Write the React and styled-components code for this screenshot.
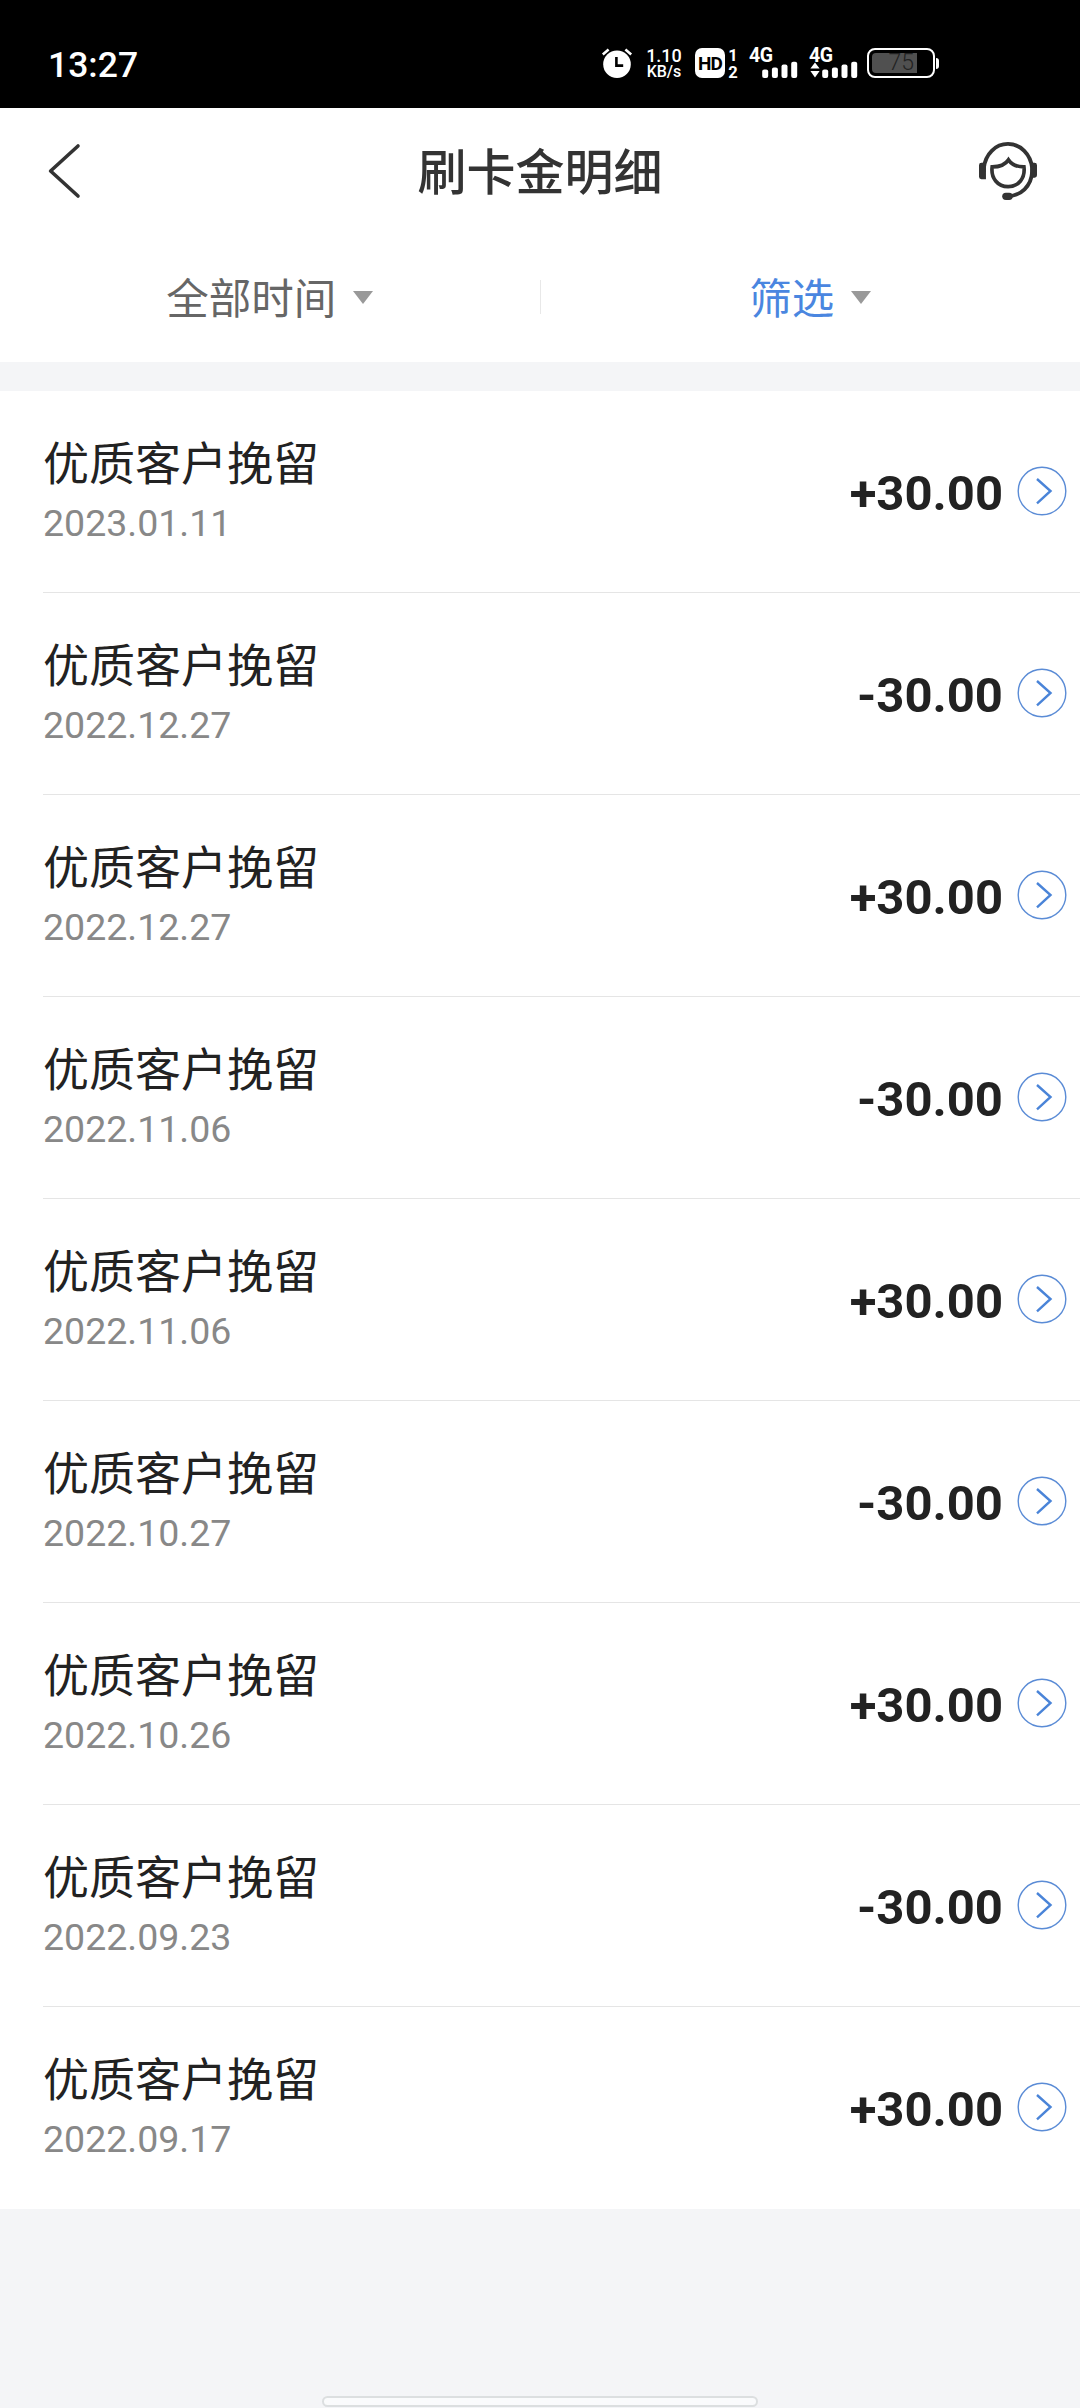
import React from "react";
import styled, { createGlobalStyle } from "styled-components";

const records = [
  { date: "2023.01.11", amount: "+30.00" },
  { date: "2022.12.27", amount: "-30.00" },
  { date: "2022.12.27", amount: "+30.00" },
  { date: "2022.11.06", amount: "-30.00" },
  { date: "2022.11.06", amount: "+30.00" },
  { date: "2022.10.27", amount: "-30.00" },
  { date: "2022.10.26", amount: "+30.00" },
  { date: "2022.09.23", amount: "-30.00" },
  { date: "2022.09.17", amount: "+30.00" },
];

const App = () => {
  return (
    <Screen>
      <GlobalStyle />
      <StatusBar>
        <Clock>13:27</Clock>
        <StatusIcons>
          <AlarmIcon />
          <NetSpeed>
            <Speed>1.10</Speed>
            <Unit>KB/s</Unit>
          </NetSpeed>
          <HdBadge>HD</HdBadge>
          <SimNumbers>
            <span>1</span>
            <span>2</span>
          </SimNumbers>
          <Signal />
          <Signal transfer />
          <Battery>
            <BatteryLevel>75</BatteryLevel>
          </Battery>
          <BatteryTip />
        </StatusIcons>
      </StatusBar>
      <Header>
        <BackIcon />
        <Title>刷卡金明细</Title>
        <ServiceIcon />
      </Header>
      <Filters>
        <Filter>
          <FilterLabel>全部时间</FilterLabel>
          <Caret />
        </Filter>
        <Divider />
        <Filter>
          <FilterLabel $active>筛选</FilterLabel>
          <Caret />
        </Filter>
      </Filters>
      <List>
        {records.map((record, i) => (
          <Row key={i} $last={i === records.length - 1}>
            <Info>
              <Name>优质客户挽留</Name>
              <Date>{record.date}</Date>
            </Info>
            <Amount>{record.amount}</Amount>
            <ArrowIcon />
          </Row>
        ))}
      </List>
      <Footer>
        <HomeIndicator />
      </Footer>
    </Screen>
  );
};

function AlarmIcon() {
  return (
    <svg width="32" height="32" viewBox="0 0 32 32" fill="none">
      <circle cx="16" cy="17.3" r="13.8" fill="#fff" />
      <path d="M1.8 7.5 7.6 2.6M24.4 2.6l5.8 4.9" stroke="#fff" strokeWidth="2.6" />
      <path d="M15.4 10v8.6h6.8" stroke="#000" strokeWidth="2.6" />
    </svg>
  );
}

function Signal({ transfer }) {
  return (
    <SignalBox $transfer={transfer}>
      <SignalLabel>4G</SignalLabel>
      <svg width="50" height="32" viewBox="0 0 50 32" fill="#fff">
        {transfer && <path d="M.4 21.6 5 15.6l4.600 6zM.4 24h9.200L5 30.600z" />}
        <rect x="12.200" y="22.400" width="6" height="8.600" rx="2" />
        <rect x="21.900" y="20.600" width="6" height="10.400" rx="2" />
        <rect x="31.500" y="17.600" width="6" height="13.400" rx="2" />
        <rect x="41.200" y="14.800" width="6" height="16.200" rx="2" />
      </svg>
    </SignalBox>
  );
}

function BackIcon() {
  return (
    <svg width="40" height="60" viewBox="0 0 40 60" fill="none">
      <path
        d="M35 5 7.600 30 35 55"
        stroke="#333"
        strokeWidth="3.600"
        strokeLinecap="round"
        strokeLinejoin="round"
      />
    </svg>
  );
}

function ServiceIcon() {
  return (
    <svg width="58" height="58" viewBox="0 0 60 60" fill="none" stroke="#333">
      <path
        d="M5 31v-4C6.500 12.500 17 2 30 2s23.500 10.500 25 25v4c-.8 14.500-11.500 25-26 25.200"
        strokeWidth="4"
      />
      <path
        d="M0 24q0-2.500 2.500-2.500h4.700v17H2.500Q0 38.500 0 36zM60 24q0-2.500-2.500-2.500h-4.200l-.5 15.500h4.700q2.500 0 2.500-2.500z"
        fill="#333"
        stroke="none"
      />
      <rect x="24" y="52.400" width="11" height="7.600" rx="3.800" fill="#333" stroke="none" />
      <path
        d="M13.600 25.800c7.400 0 13-1.400 16.900-7.300 4.100 5.900 9.300 7.300 16 7.300 1.500 11.600-5.600 20.400-16.400 20.400s-18-8.800-16.500-20.400z"
        strokeWidth="3.800"
      />
    </svg>
  );
}

function ArrowIcon() {
  return (
    <svg width="50" height="50" viewBox="0 0 50 50" fill="none">
      <circle cx="25" cy="25" r="23.800" stroke="#5b8cd6" strokeWidth="1.400" />
      <path d="M20 13 33.500 25 20 37.300" stroke="#4a84d8" strokeWidth="2.400" />
    </svg>
  );
}

const GlobalStyle = createGlobalStyle`
  body {
    margin: 0;
    background: #f4f5f7;
    font-family: Roboto, "Noto Sans CJK SC", sans-serif;
  }

  svg {
    display: block;
    flex-shrink: 0;
  }
`;

const Screen = styled.div`
  display: flex;
  flex-direction: column;
  width: 1080px;
  height: 2408px;
  overflow: hidden;
`;

const StatusBar = styled.div`
  display: flex;
  justify-content: space-between;
  height: 108px;
  box-sizing: border-box;
  padding: 47px 141px 0 48px;
  background: #000;
  color: #fff;
`;

const Clock = styled.div`
  font-size: 35.5px;
  font-weight: 500;
  line-height: 36px;
`;

const StatusIcons = styled.div`
  display: flex;
  align-items: flex-start;
`;

const NetSpeed = styled.div`
  width: 38px;
  margin: 1px 12px 0 12px;
  display: flex;
  flex-direction: column;
  align-items: center;
  font-weight: 500;
`;

const Speed = styled.span`
  font-size: 18px;
  line-height: 16px;
`;

const Unit = styled.span`
  font-size: 16px;
  line-height: 16px;
`;

const HdBadge = styled.div`
  width: 30px;
  height: 30px;
  margin-top: 1px;
  border-radius: 7px;
  background: #fff;
  color: #000;
  font-size: 19px;
  font-weight: 700;
  line-height: 31px;
  letter-spacing: -0.8px;
  text-align: center;
`;

const SimNumbers = styled.div`
  display: flex;
  flex-direction: column;
  align-items: center;
  width: 12px;
  margin: 0 11px 0 2px;
  font-size: 16.5px;
  font-weight: 700;
  line-height: 17px;
`;

const SignalBox = styled.div`
  position: relative;
  width: 50px;
  margin-left: ${(props) => (props.$transfer ? "10px" : "0")};
`;

const SignalLabel = styled.span`
  position: absolute;
  top: 1px;
  left: -1px;
  font-size: 19.5px;
  font-weight: 700;
  line-height: 16px;
  letter-spacing: -0.5px;
`;

const Battery = styled.div`
  width: 68px;
  height: 30px;
  margin: 1px 0 0 7px;
  box-sizing: border-box;
  padding: 3px;
  border: 2px solid #fff;
  border-radius: 8px;
`;

const BatteryLevel = styled.div`
  width: 45px;
  height: 20px;
  border-radius: 4px 0 0 4px;
  background: #505050;
  color: #222;
  font-size: 23px;
  font-weight: 300;
  line-height: 20px;
  text-align: right;
  box-sizing: border-box;
  padding-right: 3px;
`;

const BatteryTip = styled.div`
  width: 3px;
  height: 11px;
  margin: 11px 0 0 1px;
  border-radius: 0 3px 3px 0;
  background: #fff;
`;

const Header = styled.div`
  display: flex;
  align-items: center;
  justify-content: space-between;
  height: 126px;
  box-sizing: border-box;
  padding: 0 43px;
  background: #fff;
`;

const Title = styled.div`
  padding-top: 5px;
  margin-left: 18px;
  font-size: 49px;
  font-weight: 500;
  line-height: 60px;
  color: #333;
`;

const Filters = styled.div`
  display: flex;
  align-items: center;
  height: 128px;
  box-sizing: border-box;
  padding-bottom: 2px;
  background: #fff;
`;

const Filter = styled.div`
  flex: 1;
  display: flex;
  align-items: center;
  justify-content: center;
  gap: 17px;
`;

const FilterLabel = styled.span`
  padding-top: 5px;
  font-size: 42.5px;
  line-height: 60px;
  color: ${(props) => (props.$active ? "#4a86e0" : "#666")};
`;

const Caret = styled.span`
  border: 10px solid transparent;
  border-top: 13px solid #999;
  border-bottom: none;
`;

const Divider = styled.div`
  width: 1px;
  height: 34px;
  background: #e8e8e8;
`;

const List = styled.div`
  margin-top: 29px;
  padding-left: 43px;
  background: #fff;
`;

const Row = styled.div`
  display: flex;
  align-items: center;
  height: 202px;
  box-sizing: border-box;
  padding: 0 13px 1px 0;
  border-bottom: 1px solid ${(props) => (props.$last ? "#fff" : "#e5e5e5")};
`;

const Info = styled.div`
  flex: 1;
  padding-bottom: 1px;
`;

const Name = styled.div`
  font-size: 46px;
  line-height: 64px;
  color: #222;
`;

const Date = styled.div`
  font-size: 37.5px;
  line-height: 54px;
  color: #888;
`;

const Amount = styled.div`
  padding-top: 5px;
  margin-right: 14px;
  font-size: 49px;
  font-weight: 700;
  line-height: 60px;
  color: #222;
`;

const Footer = styled.div`
  flex: 1;
  display: flex;
  align-items: flex-end;
  justify-content: center;
`;

const HomeIndicator = styled.div`
  width: 436px;
  height: 11px;
  margin-bottom: 1px;
  box-sizing: border-box;
  border: 2px solid #dcdfe0;
  border-radius: 6px;
  background: #fafbfc;
`;

export default App;
